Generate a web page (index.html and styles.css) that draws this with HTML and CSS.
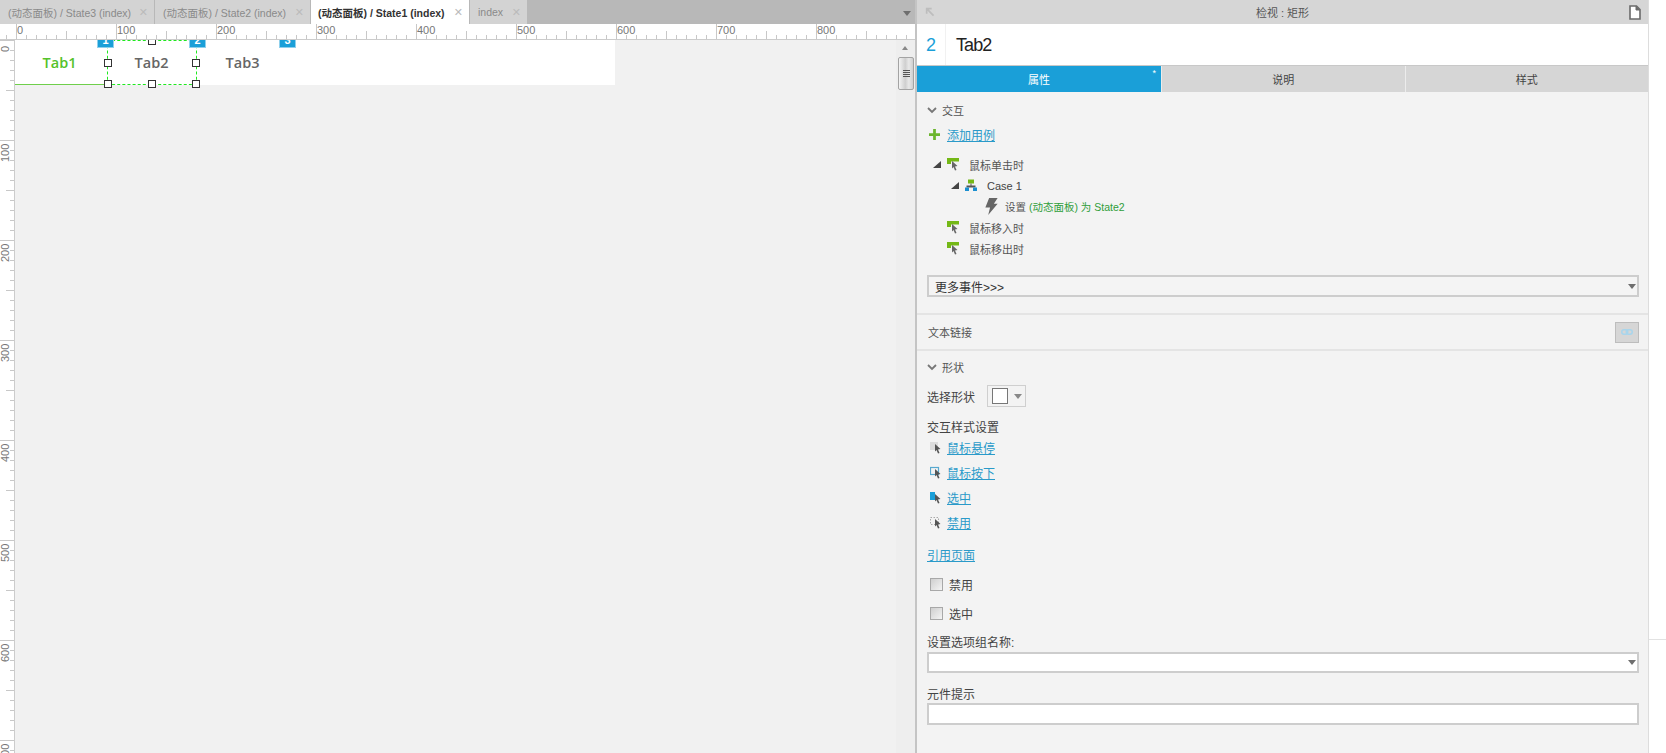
FILE: index.html
```html
<!DOCTYPE html>
<html lang="zh">
<head>
<meta charset="utf-8">
<title>检视 : 矩形</title>
<link rel="stylesheet" href="styles.css">
</head>
<body>
<div class="app">
  <main class="workspace">
    <nav class="tabbar">
      <div class="doc-tab t1"><span class="doc-label">(动态面板) / State3 (index)</span><span class="doc-x">✕</span></div>
      <div class="doc-tab t2"><span class="doc-label">(动态面板) / State2 (index)</span><span class="doc-x">✕</span></div>
      <div class="doc-tab t3 active"><span class="doc-label">(动态面板) / State1 (index)</span><span class="doc-x">✕</span></div>
      <div class="doc-tab t4"><span class="doc-label">index</span><span class="doc-x">✕</span></div>
      <div class="tabbar-fill"><i class="caret caret-dark"></i></div>
    </nav>
    <div class="hruler">
      <span>0</span><span>100</span><span>200</span><span>300</span><span>400</span><span>500</span><span>600</span><span>700</span><span>800</span>
    </div>
    <div class="stage">
      <div class="vruler">
        <span>0</span><span>100</span><span>200</span><span>300</span><span>400</span><span>500</span><span>600</span><span>700</span>
      </div>
      <div class="canvas">
        <div class="artboard">
          <div class="wtab on">Tab1</div>
          <div class="wtab">Tab2</div>
          <div class="wtab">Tab3</div>
        </div>
        <div class="selection">
          <i class="h h-tc"></i><i class="h h-ml"></i><i class="h h-mr"></i><i class="h h-bl"></i><i class="h h-bc"></i><i class="h h-br"></i>
        </div>
        <span class="badge b1">1</span>
        <span class="badge b2">2</span>
        <span class="badge b3">3</span>
      </div>
      <div class="scrollbar">
        <i class="sb-up"></i>
        <div class="sb-thumb"><i></i><i></i><i></i><i></i></div>
      </div>
    </div>
  </main>

  <aside class="inspector">
    <header class="insp-head">
      <svg class="i-pin" viewBox="0 0 12 12"><path d="M1 1h7v2H4.500L11 9.500 9.500 11 3 4.500V8H1z" fill="#bdbdbd"/></svg>
      <span class="insp-title">检视 : 矩形</span>
      <svg class="i-doc" viewBox="0 0 12 15"><path d="M1 1h6.500L11 4.500V14H1z" fill="#fff" stroke="#6a6a6a" stroke-width="1.600"/><path d="M7 1v4h4" fill="#6a6a6a" stroke="#6a6a6a"/></svg>
    </header>
    <div class="name-row">
      <span class="name-no">2</span>
      <span class="name-val">Tab2</span>
    </div>
    <div class="panel-tabs">
      <div class="ptab current">属性<sup>*</sup></div>
      <div class="ptab">说明</div>
      <div class="ptab">样式</div>
    </div>

    <div class="body">
      <div class="sec-head sec-first"><svg class="chev" viewBox="0 0 10 7"><path d="M1 1l4 4 4-4" fill="none" stroke="#777" stroke-width="1.800"/></svg>交互</div>
      <div class="add-row">
        <svg class="i-plus" viewBox="0 0 12 12"><path d="M4.500 0h3v4.500H12v3H7.500V12h-3V7.500H0v-3h4.500z" fill="#6cb52d"/></svg>
        <a class="link">添加用例</a>
      </div>

      <div class="tree">
        <div class="node lv0">
          <i class="tri"></i>
          <svg class="i-ev" viewBox="0 0 12 13"><path d="M0 0h12v3.500H4V6H0z" fill="#74b816"/><path d="M5 3l5.500 5-2.500.5 1.500 3.500-1.500.5L6.500 9 5 10.500z" fill="#666"/></svg>
          <span>鼠标单击时</span>
        </div>
        <div class="node lv1">
          <i class="tri"></i>
          <svg class="i-ev" viewBox="0 0 12 12"><path d="M3 0h6v4H3z" fill="#74b816"/><path d="M5.500 4h1v3h-1zM1.500 6h9v2h-9z" fill="#555"/><path d="M0 8h4v3.500H0zM8 8h4v3.500H8z" fill="#1a8fd0"/></svg>
          <span>Case 1</span>
        </div>
        <div class="node lv2">
          <svg class="i-bolt" viewBox="0 0 13 18"><path d="M4 0h9L9 6h4L3 18l2-8H0z" fill="#666"/></svg>
          <span>设置 <em>(动态面板) 为 State2</em></span>
        </div>
        <div class="node lv0 leaf">
          <svg class="i-ev" viewBox="0 0 12 13"><path d="M0 0h12v3.500H4V6H0z" fill="#74b816"/><path d="M5 3l5.500 5-2.500.5 1.500 3.500-1.500.5L6.500 9 5 10.500z" fill="#666"/></svg>
          <span>鼠标移入时</span>
        </div>
        <div class="node lv0 leaf">
          <svg class="i-ev" viewBox="0 0 12 13"><path d="M0 0h12v3.500H4V6H0z" fill="#74b816"/><path d="M5 3l5.500 5-2.500.5 1.500 3.500-1.500.5L6.500 9 5 10.500z" fill="#666"/></svg>
          <span>鼠标移出时</span>
        </div>
      </div>

      <div class="combo combo-events"><span>更多事件&gt;&gt;&gt;</span><i class="caret caret-dark"></i></div>
    </div>

    <hr class="rule rule-a">
    <div class="linkline">
      <span>文本链接</span>
      <span class="linkbtn"><svg viewBox="0 0 12 6"><rect x=".75" y=".75" width="6" height="4.500" rx="2.200" fill="none" stroke="#a8d5ec" stroke-width="1.500"/><rect x="5.250" y=".75" width="6" height="4.500" rx="2.200" fill="none" stroke="#a8d5ec" stroke-width="1.500"/></svg></span>
    </div>
    <hr class="rule">

    <div class="body">
      <div class="sec-head sec-shape"><svg class="chev" viewBox="0 0 10 7"><path d="M1 1l4 4 4-4" fill="none" stroke="#777" stroke-width="1.800"/></svg>形状</div>
      <div class="shape-row">
        <span>选择形状</span>
        <span class="shape-btn"><i class="swatch"></i><i class="caret caret-mid"></i></span>
      </div>
      <div class="label style-title">交互样式设置</div>
      <div class="style-row">
        <svg class="i-st" viewBox="0 0 12 13"><rect x="0" y="1" width="8" height="8" fill="#dcdcdc"/><path d="M5 3l5.500 5-2.500.5 1.500 3.500-1.500.5L6.500 9 5 10.500z" fill="#555"/></svg>
        <a class="link">鼠标悬停</a>
      </div>
      <div class="style-row">
        <svg class="i-st" viewBox="0 0 12 13"><rect x=".5" y="1.500" width="8" height="7" fill="none" stroke="#58a9cf" stroke-width="1.200"/><path d="M5 3l5.500 5-2.500.5 1.500 3.500-1.500.5L6.500 9 5 10.500z" fill="#555"/></svg>
        <a class="link">鼠标按下</a>
      </div>
      <div class="style-row">
        <svg class="i-st" viewBox="0 0 12 13"><rect x="0" y="1" width="5" height="8" fill="#1a9fd8"/><path d="M5 3l5.500 5-2.500.5 1.500 3.500-1.500.5L6.500 9 5 10.500z" fill="#555"/></svg>
        <a class="link">选中</a>
      </div>
      <div class="style-row">
        <svg class="i-st" viewBox="0 0 12 13"><rect x=".5" y="1.500" width="8" height="7" fill="none" stroke="#aaa" stroke-dasharray="1.500 1.500"/><path d="M5 3l5.500 5-2.500.5 1.500 3.500-1.500.5L6.500 9 5 10.500z" fill="#555"/></svg>
        <a class="link">禁用</a>
      </div>
      <div class="ref-row"><a class="link">引用页面</a></div>
      <div class="checks">
        <label class="check"><i class="box"></i><span>禁用</span></label>
        <label class="check"><i class="box"></i><span>选中</span></label>
      </div>
      <div class="label group-label">设置选项组名称:</div>
      <div class="combo combo-field"><i class="caret caret-dark"></i></div>
      <div class="label tip-label">元件提示</div>
      <div class="field"></div>
    </div>
  </aside>

  <div class="margin-strip"><hr></div>
</div>
</body>
</html>
```

FILE: styles.css
```css
* { box-sizing: border-box; }
html, body { margin: 0; height: 100%; background: #fff; overflow: hidden; }
body { font-family: "Liberation Sans", "Noto Sans CJK SC", sans-serif; font-size: 12px; color: #444; }
i, em { font-style: normal; }

.app { display: flex; width: 1666px; height: 753px; }

/* ---------- left: document workspace ---------- */
.workspace { width: 915px; display: flex; flex-direction: column; }

.tabbar { height: 24px; display: flex; background: #b8b8b8; gap: 1px; width: 917px; flex: none; }
.doc-tab { height: 24px; display: flex; align-items: center; background: #d3d3d3; font-size: 10.500px; color: #8a8a8a; flex: none; }
.doc-tab.t1 { width: 154px; padding-left: 8px; }
.doc-tab.t2 { width: 155px; padding-left: 8px; }
.doc-tab.t3 { width: 158px; padding-left: 7px; }
.doc-tab.t4 { width: 57px; padding-left: 8px; }
.doc-tab.active { background: #fff; color: #333; font-weight: bold; }
.doc-label { white-space: nowrap; }
.doc-x { margin-left: auto; margin-right: 6px; color: #bbb; font-size: 11px; font-weight: bold; font-family: "DejaVu Sans", sans-serif; }
.tabbar-fill { flex: 1; display: flex; justify-content: flex-end; align-items: center; padding: 2px 6px 0 0; }
.caret { display: block; width: 0; height: 0; border-left: 4px solid transparent; border-right: 4px solid transparent; border-top: 5px solid #777; }
.caret-dark { border-top-color: #6e6e6e; }

.hruler {
  height: 16px; flex: none; display: flex; padding-left: 16px; overflow: hidden;
  background-color: #fff;
  border-bottom: 1px solid #ccc;
  background-image:
    linear-gradient(to right, #c8c8c8 1px, transparent 1px),
    linear-gradient(to right, #c8c8c8 1px, transparent 1px),
    linear-gradient(to right, #c8c8c8 1px, transparent 1px);
  background-repeat: repeat-x;
  background-size: 100px 16px, 100px 8px, 10px 4px;
  background-position: 16px 0, 66px 7px, 16px 11px;
}
.hruler span { width: 100px; flex: none; padding-left: 1px; font-size: 11px; line-height: 13px; color: #777; }

.stage { flex: 1; display: flex; min-height: 0; }

.vruler {
  width: 15px; flex: none; overflow: hidden; display: flex; flex-direction: column;
  background-color: #fff;
  border-right: 1px solid #ccc;
  background-image:
    linear-gradient(to bottom, #c8c8c8 1px, transparent 1px),
    linear-gradient(to bottom, #c8c8c8 1px, transparent 1px),
    linear-gradient(to bottom, #c8c8c8 1px, transparent 1px);
  background-repeat: repeat-y;
  background-size: 14px 100px, 8px 100px, 4px 10px;
  background-position: 0 0, 6px 50px, 10px 0;
}
.vruler span {
  height: 100px; flex: none; width: 11px; padding-bottom: 4px;
  font-size: 11px; line-height: 11px; color: #777;
  writing-mode: vertical-rl; transform: rotate(180deg); text-align: right;
}
.vruler span:first-child { padding-bottom: 6px; }

.canvas { flex: 1; position: relative; overflow: hidden; background: #f1f1f1; }
.artboard { width: 600px; height: 45px; background: #fff; display: flex; }
.wtab { width: 91px; height: 45px; display: flex; align-items: center; justify-content: center; font-family: "Open Sans", "Liberation Sans", sans-serif; font-size: 14.500px; font-weight: 600; color: #666; padding-bottom: 1px; }
.wtab.on { color: #55c22a; border-bottom: 1px solid #6fcf4b; padding: 1px 2px 0 0; }

.selection { position: absolute; left: 92px; top: 0; width: 90px; height: 45px; border: 1px dashed #1fe81f; }
.h { position: absolute; width: 8px; height: 8px; background: #fff; border: 1.500px solid #333; transform: translate(-50%, -50%); }
.h-tc { left: 50%; top: 0; }
.h-ml { left: 0; top: 50%; }
.h-mr { left: 100%; top: 50%; }
.h-bl { left: 0; top: 100%; }
.h-bc { left: 50%; top: 100%; }
.h-br { left: 100%; top: 100%; }

.badge { position: absolute; top: -8px; width: 17px; height: 16px; background: #1a9fd8; border: 1px solid #8fd0ec; color: #fff; font-size: 11px; font-weight: bold; text-align: center; line-height: 14px; }
.b1 { left: 82px; }
.b2 { left: 174px; }
.b3 { left: 264px; }

.scrollbar { width: 19px; flex: none; background: #eeeeee; position: relative; padding: 17px 1px 0 2px; }
.sb-up { position: absolute; left: 6px; top: 6px; width: 0; height: 0; border-left: 3px solid transparent; border-right: 3px solid transparent; border-bottom: 4px solid #888; }
.sb-thumb { height: 33px; border: 1px solid #a3a3a3; border-radius: 2px; background: linear-gradient(to right, #f4f4f4, #cfcfcf 45%, #e8e8e8 70%, #cfcfcf); display: flex; flex-direction: column; align-items: center; justify-content: center; gap: 1px; }
.sb-thumb i { display: block; width: 7px; height: 1px; background: #555; }

/* ---------- right: inspector ---------- */
.inspector { width: 734px; flex: none; background: #f3f3f3; border-left: 2px solid #c4c4c4; border-right: 1px solid #ddd; }
.insp-head { height: 24px; background: #d6d6d6; display: flex; align-items: center; justify-content: center; position: relative; font-size: 11px; color: #555; }
.i-pin { position: absolute; left: 8px; top: 7px; width: 10px; height: 10px; }
.i-doc { position: absolute; right: 7px; top: 5px; width: 12px; height: 15px; }
.name-row { height: 41px; background: #fff; display: flex; align-items: center; }
.name-no { width: 29px; height: 100%; border-right: 1px solid #f1f1f1; padding: 1px 0 0 9px; font-size: 18px; letter-spacing: -.9px; line-height: 41px; color: #1a9fd8; }
.name-val { padding: 2px 0 0 10px; font-size: 18px; color: #222; letter-spacing: -.9px; }
.panel-tabs { height: 27px; display: flex; border-top: 1px solid #c8c8c8; background: #d6d6d6; }
.ptab { flex: 1; display: flex; align-items: center; justify-content: center; position: relative; font-size: 11px; color: #444; border-left: 1px solid #ececec; }
.ptab.current { flex: 0 0 244px; background: #1a9fd8; color: #fff; border-left: 0; }
.ptab sup { position: absolute; right: 5px; top: 3px; font-size: 9px; line-height: 9px; }

.body { padding: 0 9px 0 10px; }
.sec-head { height: 20px; display: flex; align-items: center; font-size: 11px; color: #555; }
.sec-first { margin-top: 8px; }
.sec-shape { margin-top: 6px; }
.chev { width: 10px; height: 7px; margin-right: 5px; }
.add-row { height: 20px; margin-top: 4px; display: flex; align-items: center; padding-left: 2px; }
.i-plus { width: 11px; height: 11px; margin-right: 7px; }
.link { color: #2a9ac9; text-decoration: underline; font-size: 12px; cursor: pointer; }

.tree { margin-top: 10px; font-size: 11px; color: #555; }
.node { height: 21px; display: flex; align-items: center; }
.lv0 { padding-left: 6px; }
.lv1 { padding-left: 24px; }
.lv2 { padding-left: 58px; font-size: 10.500px; }
.leaf { padding-left: 20px; }
.tri { width: 0; height: 0; border-left: 8px solid transparent; border-bottom: 7px solid #444; margin-right: 6px; flex: none; }
.i-ev { width: 12px; height: 13px; margin-right: 10px; flex: none; }
.lv1 span { font-size: 11px; color: #444; padding-top: 1px; }
.i-bolt { width: 13px; height: 17px; margin-right: 7px; flex: none; }
.node em { color: #2f9e3a; }

.combo { background: #f4f4f4; border: 2px solid #cdcdcd; display: flex; align-items: center; justify-content: space-between; padding: 0 1px 0 6px; color: #333; }
.combo-events { height: 22px; margin-top: 16px; }
.combo-field { height: 21px; margin-top: 2px; background: #fff; justify-content: flex-end; }

.rule { border: 0; height: 2px; background: #e4e4e4; margin: 0; }
.rule-a { margin-top: 16px; }
.linkline { height: 34px; display: flex; align-items: center; justify-content: space-between; padding: 0 9px 0 11px; font-size: 11px; color: #555; }
.linkbtn { width: 24px; height: 21px; background: #d6d6d6; border: 1px solid #bdbdbd; display: flex; align-items: center; justify-content: center; }
.linkbtn svg { width: 12px; height: 6px; }

.shape-row { height: 22px; margin-top: 8px; display: flex; align-items: center; color: #444; }
.shape-btn { margin-left: 12px; width: 39px; height: 22px; border: 1px solid #cfcfcf; display: flex; align-items: center; padding-left: 4px; }
.swatch { width: 16px; height: 16px; background: #fff; border: 1px solid #777; margin-right: 6px; }
.caret-mid { border-top-color: #888; }

.label { color: #444; height: 18px; display: flex; align-items: center; }
.style-title { margin-top: 10px; }
.style-row { height: 25px; display: flex; align-items: center; padding-left: 3px; }
.i-st { width: 12px; height: 13px; margin-right: 5px; flex: none; }
.ref-row { height: 20px; margin-top: 9px; display: flex; align-items: center; }
.checks { margin-top: 6px; }
.check { height: 29px; display: flex; align-items: center; padding-left: 3px; color: #444; }
.box { width: 13px; height: 13px; border: 1px solid #a8a8a8; background: linear-gradient(135deg, #cfcfcf, #f4f4f4); margin-right: 6px; }
.group-label { margin-top: 4px; }
.tip-label { margin: 11px 0 1px; }
.field { height: 22px; background: #fff; border: 2px solid #cdcdcd; }

.margin-strip { flex: 1; }
.margin-strip hr { border: 0; height: 1px; background: #e2e2e2; margin: 639px 0 0; }
```
